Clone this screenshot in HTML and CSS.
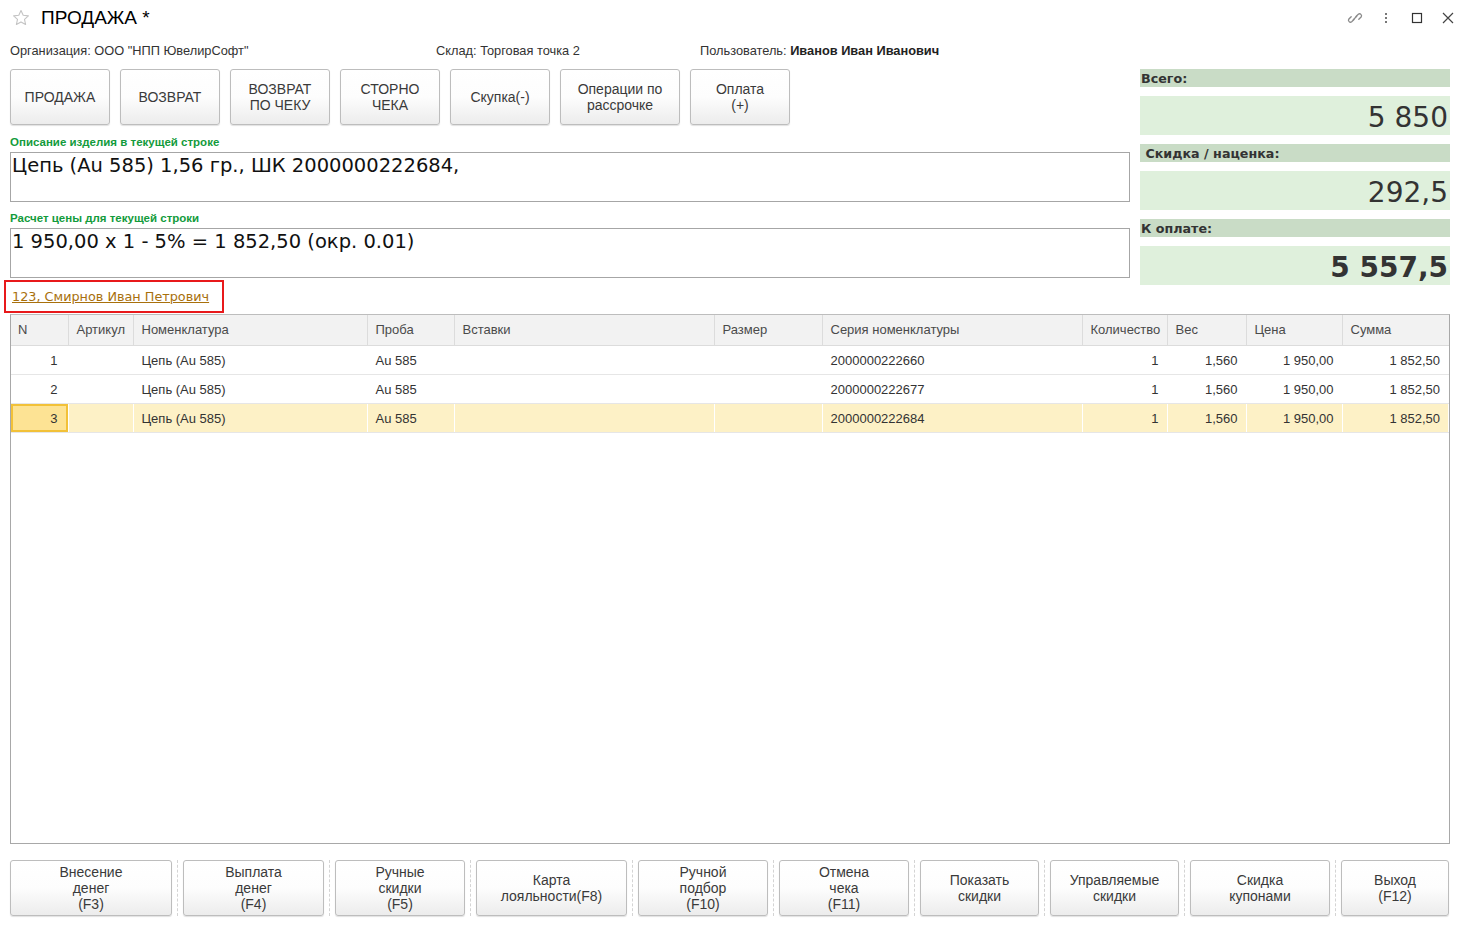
FILE: index.html
```html
<!DOCTYPE html>
<html lang="ru">
<head>
<meta charset="utf-8">
<title>ПРОДАЖА</title>
<link rel="stylesheet" href="styles.css">
</head>
<body>
<div class="titlebar">
  <svg class="star" width="18" height="18" viewBox="0 0 18 18"><path d="M9 1.5l2.2 4.8 5.2.6-3.9 3.5 1.1 5.1L9 12.9l-4.6 2.6 1.1-5.1-3.9-3.5 5.2-.6z" fill="none" stroke="#c4c4c4" stroke-width="1.1" stroke-linejoin="round"/></svg>
  <div class="title">ПРОДАЖА *</div>
  <div class="wincontrols">
    <svg width="16" height="16" viewBox="0 0 16 16"><g fill="none" stroke="#8a8a8a" stroke-width="1.3" stroke-linecap="round"><path d="M7 9.5l-2.3 2.3a2 2 0 0 1-2.8-2.8L4.2 6.7"/><path d="M9 6.5l2.3-2.3a2 2 0 0 1 2.8 2.8L11.8 9.3"/><path d="M6.3 9.7l3.4-3.4"/></g></svg>
    <svg width="16" height="16" viewBox="0 0 16 16"><g fill="#777"><rect x="7" y="3" width="2" height="2"/><rect x="7" y="7" width="2" height="2"/><rect x="7" y="11" width="2" height="2"/></g></svg>
    <svg width="16" height="16" viewBox="0 0 16 16"><rect x="3.5" y="3.5" width="9" height="9" fill="none" stroke="#333" stroke-width="1.2"/></svg>
    <svg width="16" height="16" viewBox="0 0 16 16"><path d="M3 3l10 10M13 3L3 13" stroke="#444" stroke-width="1.2"/></svg>
  </div>
</div>
<div class="info">
  <div class="info-org">Организация: ООО "НПП ЮвелирСофт"</div>
  <div class="info-store">Склад: Торговая точка 2</div>
  <div class="info-user">Пользователь: <b>Иванов Иван Иванович</b></div>
</div>
<div class="top">
  <div class="left">
    <div class="actions">
      <button class="btn w100">ПРОДАЖА</button>
      <button class="btn w100">ВОЗВРАТ</button>
      <button class="btn w100">ВОЗВРАТ<br>ПО ЧЕКУ</button>
      <button class="btn w100">СТОРНО<br>ЧЕКА</button>
      <button class="btn w100">Скупка(-)</button>
      <button class="btn w120">Операции по<br>рассрочке</button>
      <button class="btn w100">Оплата<br>(+)</button>
    </div>
    <div class="glabel first">Описание изделия в текущей строке</div>
    <div class="bigbox">Цепь (Au 585) 1,56 гр., ШК 2000000222684,</div>
    <div class="glabel">Расчет цены для текущей строки</div>
    <div class="bigbox">1 950,00 x 1 - 5% = 1 852,50 (окр. 0.01)</div>
    <div class="clientbox"><a class="client" href="#">123, Смирнов Иван Петрович</a></div>
  </div>
  <div class="right">
    <div class="sumhead">Всего:</div>
    <div class="sumval">5 850</div>
    <div class="sumhead">&nbsp;Скидка / наценка:</div>
    <div class="sumval">292,5</div>
    <div class="sumhead">К оплате:</div>
    <div class="sumval bold">5 557,5</div>
  </div>
</div>
<div class="tablewrap">
  <table class="grid">
    <colgroup>
      <col style="width:57px"><col style="width:65px"><col style="width:234px"><col style="width:87px"><col style="width:260px"><col style="width:108px"><col style="width:260px"><col style="width:85px"><col style="width:79px"><col style="width:96px"><col>
    </colgroup>
    <thead>
      <tr><th>N</th><th>Артикул</th><th>Номенклатура</th><th>Проба</th><th>Вставки</th><th>Размер</th><th>Серия номенклатуры</th><th>Количество</th><th>Вес</th><th>Цена</th><th>Сумма</th></tr>
    </thead>
    <tbody>
      <tr><td class="num n">1</td><td></td><td>Цепь (Au 585)</td><td>Au 585</td><td></td><td></td><td>2000000222660</td><td class="num">1</td><td class="num">1,560</td><td class="num">1 950,00</td><td class="num">1 852,50</td></tr>
      <tr><td class="num n">2</td><td></td><td>Цепь (Au 585)</td><td>Au 585</td><td></td><td></td><td>2000000222677</td><td class="num">1</td><td class="num">1,560</td><td class="num">1 950,00</td><td class="num">1 852,50</td></tr>
      <tr class="sel"><td class="num n cur">3</td><td></td><td>Цепь (Au 585)</td><td>Au 585</td><td></td><td></td><td>2000000222684</td><td class="num">1</td><td class="num">1,560</td><td class="num">1 950,00</td><td class="num">1 852,50</td></tr>
    </tbody>
  </table>
</div>
<div class="footer">
  <button class="btn fb" style="width:162px">Внесение<br>денег<br>(F3)</button>
  <span class="sep"></span>
  <button class="btn fb" style="width:141px">Выплата<br>денег<br>(F4)</button>
  <span class="sep"></span>
  <button class="btn fb" style="width:130px">Ручные<br>скидки<br>(F5)</button>
  <span class="sep"></span>
  <button class="btn fb" style="width:151px">Карта<br>лояльности(F8)</button>
  <span class="sep"></span>
  <button class="btn fb" style="width:130px">Ручной<br>подбор<br>(F10)</button>
  <span class="sep"></span>
  <button class="btn fb" style="width:130px">Отмена<br>чека<br>(F11)</button>
  <span class="sep"></span>
  <button class="btn fb" style="width:119px">Показать<br>скидки</button>
  <span class="sep"></span>
  <button class="btn fb" style="width:129px">Управляемые<br>скидки</button>
  <span class="sep"></span>
  <button class="btn fb" style="width:140px">Скидка<br>купонами</button>
  <span class="sep"></span>
  <button class="btn fb" style="width:108px">Выход<br>(F12)</button>
</div>
</body>
</html>
```
FILE: styles.css
```css
* { box-sizing: border-box; }
html, body { margin: 0; padding: 0; background: #fff; }
body {
  width: 1464px;
  height: 925px;
  overflow: hidden;
  font-family: Arial, "Liberation Sans", sans-serif;
  color: #333;
}
.titlebar {
  height: 36px;
  display: flex;
  align-items: center;
  padding: 0 8px 0 12px;
}
.star { margin-right: 11px; margin-top: -1px; }
.title {
  font-size: 19px;
  color: #000;
  line-height: 22px;
}
.wincontrols {
  margin-left: auto;
  display: flex;
  gap: 15px;
  align-items: center;
}
.info {
  height: 28px;
  padding-top: 1px;
  display: flex;
  align-items: center;
  font-size: 12.8px;
  padding-left: 10px;
  color: #333;
}
.info-org { width: 426px; }
.info-store { width: 264px; }
.info b { color: #222; }
.top {
  margin-top: 5px;
  display: flex;
  gap: 10px;
  padding: 0 14px 0 10px;
}
.left { flex: 1; min-width: 0; }
.right { width: 310px; }
.actions { display: flex; gap: 10px; }
.btn {
  font-family: Arial, "Liberation Sans", sans-serif;
  font-size: 14px;
  line-height: 16px;
  color: #3a3a3a;
  height: 56px;
  padding: 0;
  border: 1px solid #bdbdbd;
  border-radius: 3px;
  background: linear-gradient(#ffffff 0%, #fdfdfd 50%, #ececec 100%);
  box-shadow: 0 1px 1px rgba(0,0,0,0.12);
  text-align: center;
}
.w100 { width: 100px; }
.w120 { width: 120px; }
.glabel {
  height: 26px;
  padding-top: 9px;
  font-size: 11.5px;
  line-height: 14px;
  font-weight: bold;
  color: #139b3c;
}
.glabel.first { height: 27px; padding-top: 10px; }
.bigbox {
  height: 50px;
  border: 1px solid #a6a6a6;
  padding: 0 1px;
  font-family: "DejaVu Sans", Verdana, sans-serif;
  font-size: 19.5px;
  line-height: 25px;
  color: #111;
}
.clientbox {
  margin: 2px 0 0 -6px;
  width: 220px;
  height: 33px;
  border: 2px solid #e8191b;
  padding-left: 6px;
  display: flex;
  align-items: center;
}
.client {
  font-family: "DejaVu Sans", Verdana, sans-serif;
  font-size: 12.8px;
  color: #a8700c;
  text-decoration: underline;
}
.sumhead {
  height: 18px;
  background: #c9dcc6;
  font-family: "DejaVu Sans", Verdana, sans-serif;
  font-weight: bold;
  font-size: 12.7px;
  line-height: 19px;
  padding-left: 1px;
  color: #333;
  margin-bottom: 9px;
}
.sumval {
  height: 39px;
  background: #dff0dc;
  font-family: "DejaVu Sans", Verdana, sans-serif;
  font-size: 28px;
  line-height: 43px;
  text-align: right;
  padding-right: 2px;
  color: #333;
  margin-bottom: 9px;
  overflow: hidden;
}
.sumval.bold { font-weight: bold; }
.tablewrap {
  margin: 1px 14px 0 10px;
  height: 530px;
  border: 1px solid #a8a8a8;
  border-top-color: #bdbdbd;
}
.grid {
  width: 100%;
  table-layout: fixed;
  border-collapse: collapse;
  font-size: 13px;
}
.grid th {
  height: 30px;
  background: #f2f2f2;
  font-weight: normal;
  color: #4a4a4a;
  text-align: left;
  padding: 0 8px;
  border-right: 1px solid #dcdcdc;
  border-bottom: 1px solid #dcdcdc;
  white-space: nowrap;
  overflow: hidden;
}
.grid th:first-child { padding-left: 7px; }
.grid th:last-child { border-right: none; }
.grid td {
  height: 29px;
  padding: 1px 8px 0;
  border-right: 1px solid #fff;
  border-bottom: 1px solid #e6e6e6;
  color: #333;
  white-space: nowrap;
}
.grid td.num { text-align: right; }
.grid td.n { padding-right: 10px; }
.grid tr.sel td { background: #fdf1c6; }
.grid tr.sel td.cur {
  background: #fde394;
  box-shadow: inset 0 0 0 2px #f2c138;
}
.footer {
  margin-top: 16px;
  padding-left: 10px;
  display: flex;
}
.fb { height: 56px; }
.sep {
  width: 11px;
  height: 56px;
  display: flex;
  justify-content: center;
}
.sep::before {
  content: "";
  width: 0;
  height: 56px;
  border-left: 1px dashed #d4d4d4;
}
```
